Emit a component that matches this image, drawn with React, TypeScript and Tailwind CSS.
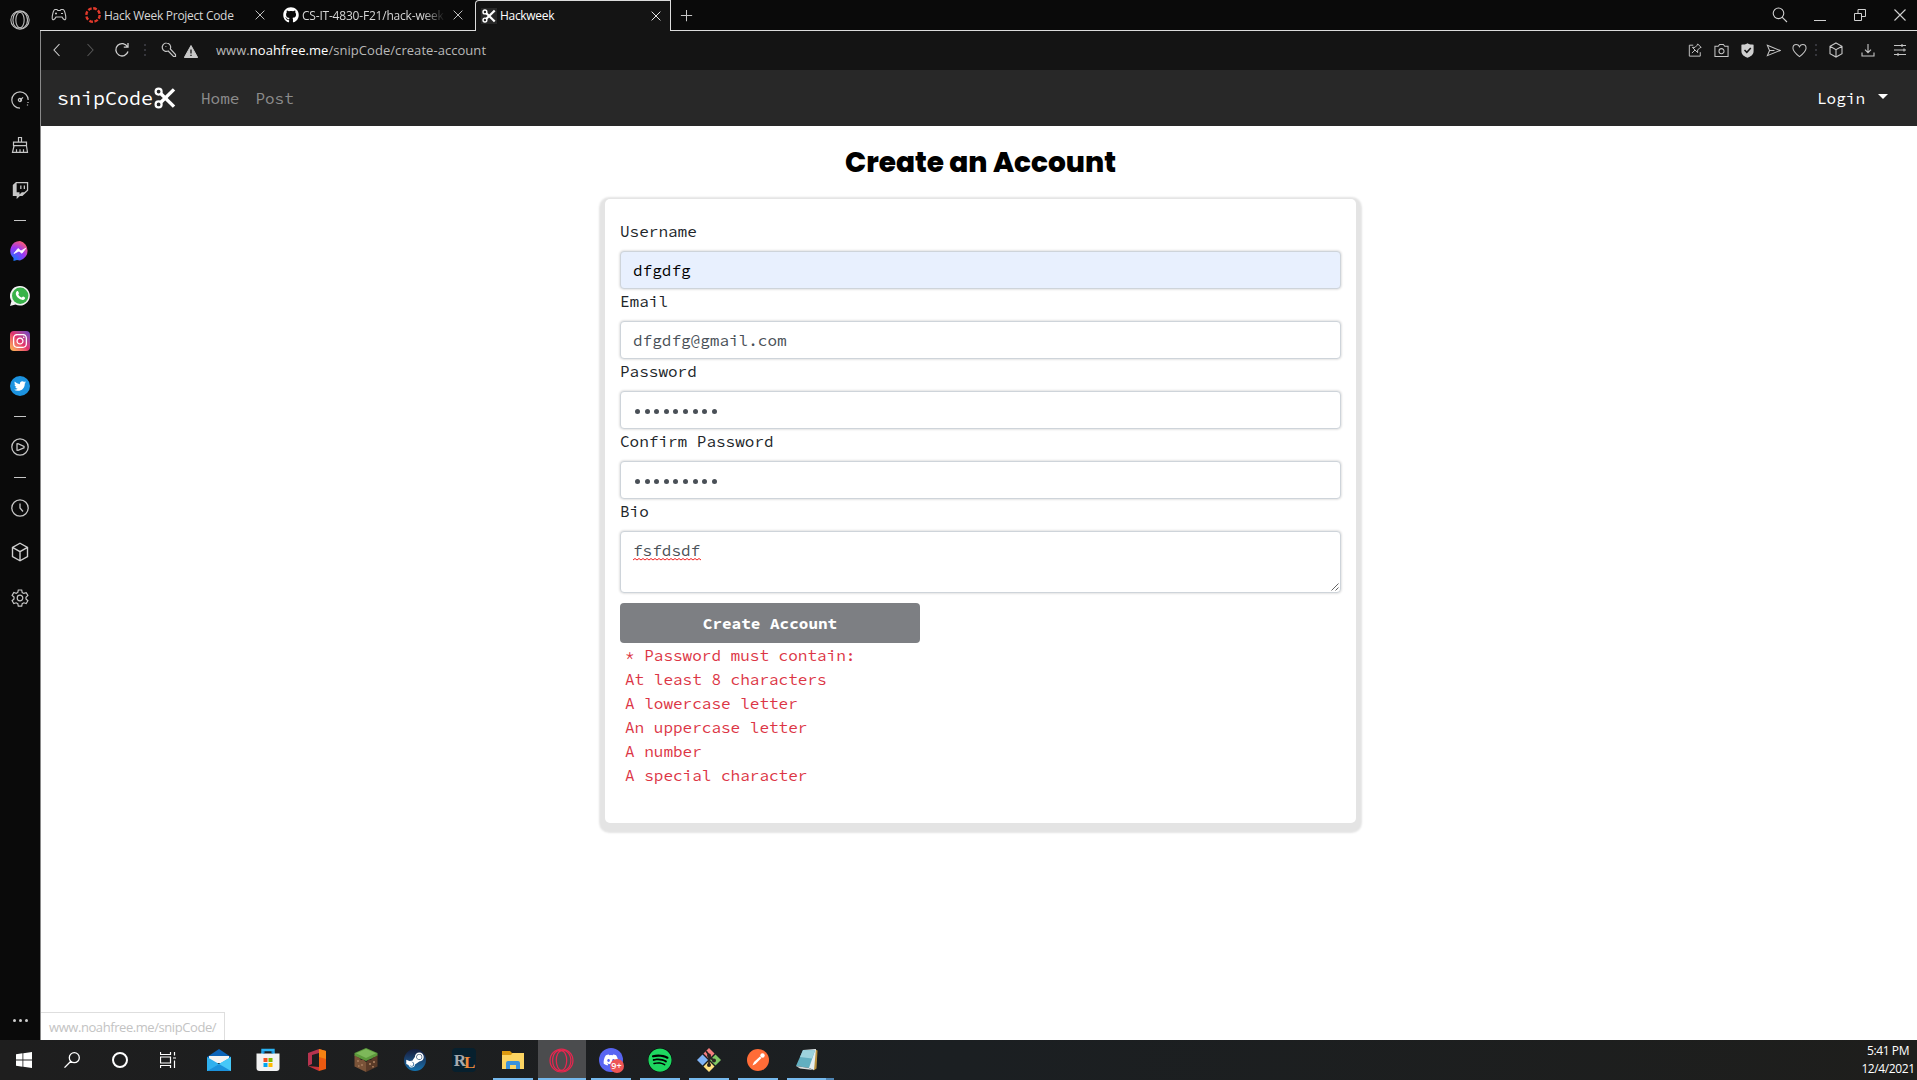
import React from 'react';
import {
  FaTwitch,
  FaInstagram,
  FaTwitter,
  FaGithub,
  FaSteamSymbol,
  FaSpotify,
  FaDiscord,
} from 'react-icons/fa';

const mono = "font-['Source_Code_Pro','Liberation_Mono',monospace]";

type LineProps = { d: string; size?: number; className?: string; w?: number; box?: number };

/** Thin outline icon made of a single path. */
const Line = ({ d, size = 16, className = 'text-[#c6c6c6]', w = 1.1, box = 16 }: LineProps) => (
  <svg
    width={size}
    height={size}
    viewBox={`0 0 ${box} ${box}`}
    fill="none"
    stroke="currentColor"
    strokeWidth={w}
    className={`shrink-0 ${className}`}
  >
    <path d={d} />
  </svg>
);

const CLOSE = 'M3 3 13 13M13 3 3 13';
const CUBE = 'M8 1 14 4.3v7.4L8 15 2 11.7V4.3ZM2 4.3 8 7.7 14 4.3M8 7.7V15';

const Scissors = ({ size, className = '' }: { size: number; className?: string }) => (
  <svg width={size} height={size} viewBox="0 0 22 22" fill="none" stroke="#fff" className={`shrink-0 ${className}`}>
    <circle cx="4.6" cy="4.6" r="3" strokeWidth="2.2" />
    <circle cx="4.6" cy="17.4" r="3" strokeWidth="2.2" />
    <path d="M6.4 6.2 20 19.6" strokeWidth="3.4" />
    <path d="M6.4 15.8 20 2.4" strokeWidth="3.4" />
  </svg>
);

const OperaRing = ({ size, color, w }: { size: number; color: string; w: number }) => (
  <svg width={size} height={size} viewBox="0 0 24 24" fill="none" stroke={color} strokeWidth={w} className="shrink-0">
    <circle cx="12" cy="12" r="11" />
    <ellipse cx="12" cy="12" rx="5" ry="9.4" />
    <path d="M12 2.6c3-2 9 2 9 9.4s-6 11.400-9 9.400M12 2.600C8 1 3.500 5 3.500 12S8 23 12 21.400" />
  </svg>
);

const Dash = () => (
  <div className="flex h-4 shrink-0 items-center justify-center">
    <div className="h-px w-3 bg-[#c6c6c6]" />
  </div>
);

const Slot = ({ children, tall }: { children: React.ReactNode; tall?: boolean }) => (
  <div className={`flex shrink-0 items-center justify-center ${tall ? 'h-[46px]' : 'h-[45px]'}`}>{children}</div>
);

const Sidebar = () => (
  <aside className="flex w-10 shrink-0 flex-col bg-[#0a0a0a]">
    <div className="mb-[37px] flex h-10 items-center justify-center">
      <OperaRing size={20} color="#bdbdbd" w={1.3} />
    </div>
    <Slot>
      <Line size={18} box={18} d="M9 17.200A8.200 8.200 0 1 1 17.200 9M8.800 9.500 12 6.300M9 10.600a1.600 1.600 0 1 1-.1-3.200 1.600 1.600 0 0 1 .1 3.200M17 11v1M16.500 13.500v1" w={1.2} />
    </Slot>
    <Slot tall>
      <Line size={18} box={18} d="M7.500 6V1.500h3V6M2.500 6.200h13v3.500h-13ZM3 10 1.500 16.300h15L15.500 10M5.500 16.300v-3M9 16.300v-3M12.500 16.300v-3" w={1.2} />
    </Slot>
    <Slot>
      <FaTwitch size={17} className="text-[#c6c6c6]" />
    </Slot>
    <div className="-mt-px">
      <Dash />
    </div>
    <Slot>
      <svg width="20" height="20" viewBox="0 0 20 20">
        <defs>
          <radialGradient id="msg" cx="0.2" cy="1" r="1.1">
            <stop offset="0" stopColor="#0a7cff" />
            <stop offset="0.600" stopColor="#9a36f5" />
            <stop offset="1" stopColor="#ff5c70" />
          </radialGradient>
        </defs>
        <path d="M10 0a10 10 0 0 1 0 19.400 11 11 0 0 1-3-.4L3.500 20V17A9.800 9.800 0 0 1 10 0Z" fill="url(#msg)" />
        <path d="M4 12.500 8 7.500 11 10l4.800-2.800L12 12.300 9 10Z" fill="#fff" stroke="#fff" strokeWidth="0.8" />
      </svg>
    </Slot>
    <Slot>
      <svg width="20" height="20" viewBox="0 0 20 20">
        <path d="M10.200 0a9.800 9.800 0 1 1-4.700 18.500L0 20l1.500-5A9.800 9.800 0 0 1 10.200 0Z" fill="#f2f2f2" />
        <circle cx="10.200" cy="9.800" r="8.200" fill="#38b249" />
        <path d="M6.600 5.500c1-1 1.500-.5 2.300 1.500.3.800-.9 1.300-.4 2 .8 1.300 1.700 2 3 2.600.7.200 1-1.400 1.800-1 2.200 1 2.200 1.200 1.400 2.500-1 1.300-3 1.300-5.700-.5C6.300 10.600 4.800 7.600 6.600 5.500Z" fill="#fff" />
      </svg>
    </Slot>
    <Slot>
      <div className="flex size-5 items-center justify-center rounded bg-linear-to-tr from-[#fdc04c] via-[#e3306c] to-[#6a3fc8]">
        <FaInstagram size={16} className="text-white" />
      </div>
    </Slot>
    <Slot>
      <div className="flex size-5 items-center justify-center rounded-full bg-[#1c93e0]">
        <FaTwitter size={12} className="text-white" />
      </div>
    </Slot>
    <Dash />
    <Slot>
      <Line size={18} box={18} d="M9 .800a8.200 8.200 0 1 1 0 16.400A8.200 8.200 0 0 1 9 .800M6 5.800v6.400l1 .2 6-2.600V8.400l-6-2.800Z" w={1.3} />
    </Slot>
    <Dash />
    <Slot>
      <Line size={18} box={18} d="M9 .800a8.200 8.200 0 1 1 0 16.400A8.200 8.200 0 0 1 9 .800M9 4.500V9l3 3.500" w={1.3} />
    </Slot>
    <Slot>
      <Line size={20} d={CUBE} w={1.1} className="-mt-0.5 text-[#cfcfcf]" />
    </Slot>
    <Slot>
      <Line
        size={18}
        box={18}
        d="M7.300 1h3.400l.5 2.500 1.600.9 2.400-.8 1.700 2.900-1.900 1.700v1.800l1.900 1.700-1.700 2.900-2.400-.8-1.600.9-.5 2.500H7.300l-.5-2.500-1.600-.9-2.400.8-1.700-2.900L3 9.900V8.100L1.100 6.400l1.700-2.900 2.400.8 1.600-.9ZM9 6.200a2.800 2.800 0 1 1 0 5.600 2.800 2.800 0 0 1 0-5.600"
        w={1.200}
      />
    </Slot>
    <div className="mt-auto mb-[18px] flex justify-center gap-[3px]">
      <div className="size-[3px] rounded-full bg-[#cfcfcf]" />
      <div className="size-[3px] rounded-full bg-[#cfcfcf]" />
      <div className="size-[3px] rounded-full bg-[#cfcfcf]" />
    </div>
  </aside>
);

const TabBar = () => (
  <div className="flex h-[31px] shrink-0 items-stretch text-[12px] text-[#d6d6d6]">
    <div className="flex w-[435px] shrink-0 items-center border-b border-[#dcdcdc]">
      <svg width="16" height="14" viewBox="0 0 16 14" fill="none" stroke="#c6c6c6" strokeWidth="1.1" className="ml-[11px] shrink-0">
        <path d="M4 1.500h2l.8 1h2.400l.8-1h2c1.500 0 3 6 2.800 9-.2 2-2.300 1.500-3.800-1.500H5c-1.500 3-3.600 3.500-3.800 1.500C1 7.500 2.500 1.500 4 1.500ZM4 5.500h2M5 4.500v2M10 5.500h2" />
      </svg>
      <svg width="16" height="16" viewBox="0 0 16 16" fill="none" className="ml-[18px] shrink-0">
        <circle cx="8" cy="8" r="6.700" stroke="#e0392b" strokeWidth="2.400" strokeDasharray="3.700 1.560" />
      </svg>
      <span className="ml-[3px] w-[149px] shrink-0 pt-px whitespace-nowrap tracking-[-0.28px]">Hack Week Project Code</span>
      <Line d={CLOSE} size={14} />
      <FaGithub size={16} className="ml-4 shrink-0 text-white" />
      <span className="ml-[3px] w-[143px] shrink-0 overflow-hidden mask-r-from-85% pt-px whitespace-nowrap tracking-[-0.200px]">
        CS-IT-4830-F21/hack-week
      </span>
      <Line d={CLOSE} size={14} className="ml-[6px] text-[#c6c6c6]" />
    </div>
    <div className="flex w-[196px] shrink-0 items-center rounded-tl-[4px] border border-b-0 border-[#dcdcdc] bg-[#141414] pb-px">
      <div className="ml-[5px] flex size-4 items-center justify-center bg-[#282828]">
        <Scissors size={14} />
      </div>
      <span className="ml-[3px] flex-1 pt-px tracking-[-0.300px] text-white">Hackweek</span>
      <Line d={CLOSE} size={14} className="mr-[7px] text-[#eee]" />
    </div>
    <div className="flex min-w-0 flex-1 items-center border-b border-[#dcdcdc]">
      <Line d="M8 2v12M2 8h12" size={15} className="ml-2 text-[#c6c6c6]" />
      <div className="ml-auto flex items-center pr-[11px]">
        <Line d="M6.500 1a5.300 5.300 0 1 1 0 10.600 5.300 5.300 0 0 1 0-10.600M10.300 10.300 15 15" size={16} className="mr-[26px] text-[#d0d0d0]" />
        <div className="mt-[10px] mr-7 h-px w-3 bg-[#d0d0d0]" />
        <Line d="M.5 4.500h7v7h-7ZM4 4.500v-4h7.500v7h-4" box={12} size={12} className="mr-7 text-[#d0d0d0]" w={1} />
        <Line d="M.5.500l11 11M11.500.500l-11 11" box={12} size={12} className="text-[#d0d0d0]" />
      </div>
    </div>
  </div>
);

const Dots = () => (
  <div className="flex flex-col gap-[3px]">
    <div className="size-[2px] bg-[#36363c]" />
    <div className="size-[2px] bg-[#36363c]" />
    <div className="size-[2px] bg-[#36363c]" />
  </div>
);

const ToolSlot = ({ children, wide }: { children: React.ReactNode; wide?: boolean }) => (
  <div className={`flex shrink-0 items-center justify-center ${wide ? 'w-8' : 'w-[26px]'}`}>{children}</div>
);

const AddressBar = () => (
  <div className="flex h-[39px] shrink-0 items-center bg-[#141414] pb-px">
    <Line d="M10.500 2 5 8l5.500 6" className="ml-2 text-[#d0d0d0]" />
    <Line d="M5.500 2 11 8l-5.500 6" className="ml-[17px] text-[#555]" />
    <Line d="M13.500 4.800A6.200 6.200 0 1 0 14 9.500M14 1v4.200H9.800" className="ml-4 text-[#d0d0d0]" w={1.300} />
    <div className="ml-[14px]">
      <Dots />
    </div>
    <Line
      d="M5.500 1a4.200 4.200 0 0 1 3.800 6L14.500 12.500v2h-2L7.200 9A4.200 4.200 0 1 1 5.500 1M4.500 4.500h.8"
      className="ml-[15px] text-[#c6c6c6]"
      w={1.200}
    />
    <svg width="14" height="13" viewBox="0 0 14 13" className="mt-0.5 ml-[7px] shrink-0">
      <path d="M7 .500 13.700 12.500H.300Z" fill="#c8c8c8" stroke="#c8c8c8" strokeLinejoin="round" />
      <path d="M7 4.500v4M7 9.700v1.300" stroke="#141414" strokeWidth="1.300" />
    </svg>
    <span className="ml-[18px] pt-px text-[13px] tracking-[0.050px] whitespace-nowrap text-[#b9b9b9]">
      www.<span className="text-white">noahfree.me</span>/snipCode/create-account
    </span>
    <div className="mr-px ml-auto flex">
      <ToolSlot>
        <Line d="M6 2.500H1.500v12.500H14v-4.500M11 1l4 4-1.500.500-2.500 2.500v3L5 5h3L10.500 2.500ZM8 8 4.500 11.500" size={14} />
      </ToolSlot>
      <ToolSlot>
        <Line d="M1 3.500h3.500L6 1.500h4l1.500 2h3.500v11H1ZM8 6a2.700 2.700 0 1 1 0 5.400A2.700 2.700 0 0 1 8 6" size={15} />
      </ToolSlot>
      <ToolSlot>
        <svg width="13" height="15" viewBox="0 0 13 15">
          <path d="M6.500.300C8 1.500 11 1.700 12.600 1.700V8c0 4-3 5.500-6.100 6.700C3.400 13.500.400 12 .400 8V1.700C2 1.700 5 1.500 6.500.300Z" fill="#cfcfcf" />
          <path d="M3.500 7 5.800 9.300 9.800 5" stroke="#141414" strokeWidth="1.500" fill="none" />
        </svg>
      </ToolSlot>
      <ToolSlot>
        <Line d="M1.500 2.500 15 8 1.500 13.500 3.800 8ZM3.800 8H9" size={15} />
      </ToolSlot>
      <ToolSlot>
        <Line d="M8 14.500C3 10.500 1 8.500 1 5.500 1 3 2.500 1.700 4.500 1.700 6 1.700 7.300 2.500 8 4c.7-1.500 2-2.300 3.500-2.300C13.500 1.700 15 3 15 5.500c0 3-2 5-7 9Z" size={15} />
      </ToolSlot>
      <div className="flex w-2 items-center justify-center">
        <Dots />
      </div>
      <ToolSlot wide>
        <Line d={CUBE} size={16} />
      </ToolSlot>
      <ToolSlot wide>
        <Line d="M8 2v8.500M5 7.700l3 3 3-3M2 10.500v3.500h12v-3.500" size={16} />
      </ToolSlot>
      <ToolSlot wide>
        <Line d="M2 3.500h12M2 8h12M2 12.500h12M10 2v3M12 6.500v3M6 11v3" size={16} />
      </ToolSlot>
    </div>
  </div>
);

const NavBar = () => (
  <nav className={`flex h-14 shrink-0 items-center bg-[#282828] ${mono}`}>
    <span className="ml-4 text-[20px] leading-8 text-white">snipCode</span>
    <Scissors size={22} className="ml-px" />
    <span className="ml-[25px] text-base leading-6 text-[#8c8c8c]">Home</span>
    <span className="ml-4 text-base leading-6 text-[#8c8c8c]">Post</span>
    <span className="ml-auto text-base leading-6 text-white">Login</span>
    <div className="mr-[29px] mb-[3px] ml-[13px] border-x-[5px] border-t-[5px] border-x-transparent border-t-white" />
  </nav>
);

const inputBase = 'h-[38px] w-full rounded border border-[#ced4da] px-3 shadow-[0_0_2px_1px_#e4e4e4]';

const Field = ({ label, value, filled }: { label: string; value: string; filled?: boolean }) => (
  <label className="block">
    <span className="mb-2 block leading-6">{label}</span>
    <div className={`${inputBase} flex items-center ${filled ? 'bg-[#e8f0fe] text-black' : 'bg-white text-[#495057]'}`}>
      {value}
    </div>
  </label>
);

const PasswordField = ({ label }: { label: string }) => (
  <label className="block">
    <span className="mb-2 block leading-6">{label}</span>
    <div className={`${inputBase} flex items-center gap-[4.600px] bg-white pt-[3px] pl-[14px]`}>
      {Array.from({ length: 9 }, (_, i) => (
        <span key={i} className="size-[5px] rounded-full bg-[#495057]" />
      ))}
    </div>
  </label>
);

const rules = [
  '* Password must contain:',
  'At least 8 characters',
  'A lowercase letter',
  'An uppercase letter',
  'A number',
  'A special character',
];

const Page = () => (
  <main className="relative flex min-h-0 flex-1 flex-col items-center bg-white pl-[3px]">
    <h1 className="mt-[19px] h-[54px] font-['Poppins','Inter',sans-serif] text-[28px] leading-9 font-extrabold whitespace-nowrap text-black [font-feature-settings:'cv11']">
      Create an Account
    </h1>
    <form
      className={`h-[624px] w-[751px] rounded-[5px] bg-white px-[15px] pt-5 text-base text-[#212529] shadow-[0_4px_2px_5.500px_#e4e4e4] ${mono}`}
    >
      <Field label="Username" value="dfgdfg" filled />
      <Field label="Email" value="dfgdfg@gmail.com" />
      <PasswordField label="Password" />
      <PasswordField label="Confirm Password" />
      <span className="mb-2 block leading-6">Bio</span>
      <div className="relative h-[62px] w-full rounded border border-[#ced4da] bg-white px-3 pt-[6px] leading-6 text-[#495057] shadow-[0_0_2px_1px_#e4e4e4]">
        fsfdsdf
        <svg width="68" height="3" viewBox="0 0 68 3" className="absolute top-[26px] left-3">
          <path
            d={`M0 2${Array.from({ length: 17 }, () => 'l2 -1.500l2 1.500').join('')}`}
            fill="none"
            stroke="#f02020"
            strokeWidth="1"
          />
        </svg>
        <svg width="8" height="8" viewBox="0 0 8 8" className="absolute right-px bottom-px">
          <path d="M.500 7.500l7-7M4.500 7.500l3-3" stroke="#555" strokeWidth="0.900" />
        </svg>
      </div>
      <button type="button" className="mt-[10px] block h-10 w-[300px] rounded bg-[#7d7f83] font-bold text-white">
        Create Account
      </button>
      <ul className="pl-[5px] text-[#dc3545]">
        {rules.map((r) => (
          <li key={r} className="leading-6">
            {r}
          </li>
        ))}
      </ul>
    </form>
    <div className="absolute bottom-0 left-0 flex h-7 w-[184px] items-center border-t border-r border-[#dedede] bg-white pt-0.5 pl-2 text-[13px] tracking-[-0.430px] whitespace-nowrap text-[#c3c3c3]">
      www.noahfree.me/snipCode/
    </div>
  </main>
);

const App48 = ({ children }: { children: React.ReactNode }) => (
  <div className="flex h-10 w-12 shrink-0 items-center justify-center">{children}</div>
);

const TaskItem = ({ children, open, active }: { children: React.ReactNode; open?: boolean; active?: boolean }) => (
  <div className="flex h-10 w-[49px] shrink-0 justify-center">
    <div className={`flex flex-col items-center ${active ? 'w-12 bg-[#4b4c4e]' : 'w-10'}`}>
      <div className="flex h-[38px] items-center justify-center pt-0.5">{children}</div>
      {(open || active) && <div className="h-0.5 w-full bg-[#76b9ed]" />}
    </div>
  </div>
);

const Taskbar = () => (
  <footer className="flex h-10 shrink-0 items-center bg-linear-to-r from-[#1e1e1e] via-[#1b1f22] to-[#1e1e1c]">
    <App48>
      <svg width="16" height="16" viewBox="0 0 16 16" fill="#fff">
        <path d="M0 2.200 6.500 1.300V7.600H0ZM7.300 1.200 16 0v7.600H7.300ZM0 8.400h6.500v6.300L0 13.800ZM7.300 8.400H16V16L7.300 14.800Z" />
      </svg>
    </App48>
    <App48>
      <Line d="M10.300.700a5 5 0 1 1 0 10 5 5 0 0 1 0-10M6.800 9.300.500 15.600" className="text-white" w={1.300} />
    </App48>
    <App48>
      <div className="size-4 rounded-full border-2 border-white" />
    </App48>
    <App48>
      <Line d="M.5 0v2.500h10V0M.5 5h10v6H.500ZM.5 16v-2.500h10V16M14.500 0v3.500M14.500 8.500V16M13 6h3" className="text-white" w={1.200} />
    </App48>
    <div className="w-[2px] shrink-0" />
    <TaskItem>
      <svg width="24" height="22" viewBox="0 0 24 22">
        <path d="M0 8 12 0l12 8v4H0Z" fill="#0a63b8" />
        <path d="M2 7h20v7H2Z" fill="#f3f3f3" />
        <path d="M0 8l12 7 12-7v14H0Z" fill="#2fb0ee" />
        <path d="M0 22 24 8v14Z" fill="#46c8f8" />
        <path d="M0 22 12 15l12 7Z" fill="#1b92dc" />
      </svg>
    </TaskItem>
    <TaskItem>
      <svg width="24" height="24" viewBox="0 0 24 24">
        <path d="M6.500 7V2h11v5" fill="none" stroke="#2bb3f3" strokeWidth="2.400" />
        <path d="M.500 5.500h23V20q0 3-3 3h-17q-3 0-3-3Z" fill="#f2f2f2" />
        <path d="M7.500 5.500V3M16.500 5.500V3" stroke="#1a8fd8" strokeWidth="2" />
        <path d="M7.500 10h4v4h-4Z" fill="#f25022" />
        <path d="M12.500 10h4v4h-4Z" fill="#7fba00" />
        <path d="M7.500 15h4v4h-4Z" fill="#00a4ef" />
        <path d="M12.500 15h4v4h-4Z" fill="#ffb900" />
      </svg>
    </TaskItem>
    <TaskItem>
      <svg width="20" height="24" viewBox="0 0 20 24">
        <path d="M12 1 1 5v13l4-2V7l7-2Z" fill="#b8334f" />
        <path d="M12 1l7 2v18l-7 2Z" fill="#eb5a10" />
        <path d="M12 1l7 2v8l-7-2Z" fill="#f58212" />
        <path d="M1 18l11 1v4Z" fill="#c9323c" />
      </svg>
    </TaskItem>
    <TaskItem>
      <svg width="24" height="24" viewBox="0 0 24 24">
        <path d="M12 0 23.500 5v3L12 13 .500 8V5Z" fill="#5c9a3c" />
        <path d="M12 1 22 5.300 12 10 2 5.300Z" fill="#7db85a" />
        <path d="M.500 7 3 9l2 .500L7 12l2-.500 3 2.500v10L.500 18.500Z" fill="#7a5338" />
        <path d="M23.500 7 21 9l-2 .500L17 12l-2-.500-3 2.500v10l11.500-5.500Z" fill="#5a3b28" />
        <path d="M3 12h2v2H3ZM7 16h2v2H7ZM4 17h1.500v2H4ZM15 15h2v2h-2ZM19 13h2v2h-2ZM18 18h2v1.500h-2Z" fill="#9c7355" />
      </svg>
    </TaskItem>
    <TaskItem>
      <div className="flex size-[22px] items-center justify-center rounded-full bg-linear-to-b from-[#141c3c] to-[#1273b0]">
        <FaSteamSymbol size={20} className="text-white" />
      </div>
    </TaskItem>
    <TaskItem>
      <div className="flex size-6 items-center justify-center rounded bg-[#07202e] font-['Liberation_Serif',serif] text-[17px] leading-none font-bold tracking-[-2px]">
        <span className="text-[#a5a9ae]">R</span>
        <span className="pt-1 text-[#f08a3c]">L</span>
      </div>
    </TaskItem>
    <TaskItem open>
      <svg width="22" height="18" viewBox="0 0 22 18">
        <path d="M0 0h8l2 2h11.500v4H0Z" fill="#dc9a10" />
        <path d="M0 4h9l1.500-2H22v16H0Z" fill="#fcd462" />
        <path d="M4 18v-6q0-2 2-2h10q2 0 2 2v6h-4v-4H8v4Z" fill="#3a92dc" />
      </svg>
    </TaskItem>
    <TaskItem active>
      <OperaRing size={25} color="#e8264f" w={1.200} />
    </TaskItem>
    <TaskItem open>
      <div className="relative flex size-6 items-center justify-center rounded-full bg-[#5865f2]">
        <FaDiscord size={16} className="text-white" />
        <div className="absolute top-[11px] left-[11px] flex size-[14px] items-center justify-center rounded-full bg-[#ee5555] text-[9px] font-semibold text-white">
          9+
        </div>
      </div>
    </TaskItem>
    <TaskItem open>
      <div className="flex size-6 items-center justify-center rounded-full bg-black">
        <FaSpotify size={24} className="text-[#1ed760]" />
      </div>
    </TaskItem>
    <TaskItem open>
      <svg width="24" height="24" viewBox="0 0 24 24">
        <path d="M12 0l5.500 5.500L12 11 6.500 5.500Z" fill="#f57e7e" />
        <path d="M5.500 6.500 11 12l-5.500 5.500L0 12Z" fill="#80b3f5" />
        <path d="M18.500 6.500 24 12l-5.500 5.500L13 12Z" fill="#80c864" />
        <path d="M12 13l5.500 5.500L12 24l-5.500-5.500Z" fill="#ffe080" />
        <path d="M9 3l3 4v10M12 8l5 5" fill="none" stroke="#2a2422" strokeWidth="1.800" />
        <circle cx="12" cy="7.500" r="2" fill="#2a2422" />
        <circle cx="12" cy="17" r="2" fill="#2a2422" />
        <circle cx="17" cy="12.500" r="2" fill="#2a2422" />
      </svg>
    </TaskItem>
    <TaskItem open>
      <svg width="22" height="22" viewBox="0 0 22 22">
        <circle cx="11" cy="11" r="11" fill="#ff6c37" />
        <path d="M5.500 16.500 7 13l6-5.500 1.500 1.500L8.500 15Z" fill="#fff" />
        <circle cx="15.500" cy="6.500" r="2.200" fill="#fff" />
      </svg>
    </TaskItem>
    <TaskItem open>
      <svg width="24" height="24" viewBox="0 0 24 24">
        <path d="M20 1.500l2.500 1-1 18-3 2Z" fill="#b9903c" />
        <path d="M8 2l13-1-2 21-5-2Z" fill="#e4eef0" />
        <path d="M8 2l12 .500L14 20 1 18Z" fill="#62afc0" />
        <path d="M8 2l12 .500-3 8L5 9Z" fill="#9dd2dc" />
        <path d="M1 18l13 2 4 2-13-1.500Z" fill="#d8dcdc" />
      </svg>
    </TaskItem>
    <div className="flex h-10 w-2 shrink-0 items-end">
      <div className="-ml-[5px] h-0.5 w-2 bg-[#4f86b5]" />
    </div>
    <div className="ml-auto w-[58px] text-center text-[12px] leading-[18px] tracking-[-0.400px] whitespace-nowrap text-white">
      <div>5:41 PM</div>
      <div>12/4/2021</div>
    </div>
  </footer>
);

export default function App() {
  return (
    <div className="flex h-screen w-full flex-col overflow-hidden bg-[#0a0a0a] font-['Segoe_UI','Open_Sans',sans-serif]">
      <div className="flex min-h-0 flex-1">
        <Sidebar />
        <div className="flex min-w-0 flex-1 flex-col">
          <TabBar />
          <div className="flex min-h-0 flex-1 flex-col border-l border-[#8a8a8a]">
            <AddressBar />
            <NavBar />
            <Page />
          </div>
        </div>
      </div>
      <Taskbar />
    </div>
  );
}
